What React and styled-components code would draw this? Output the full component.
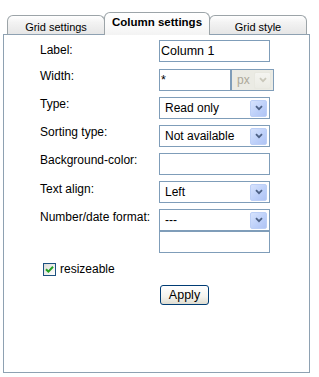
import React, { useState } from 'react'
import styled, { createGlobalStyle } from 'styled-components'

const GlobalStyle = createGlobalStyle`
  html, body {
    margin: 0;
    padding: 0;
    background: #fff;
  }
  body {
    font-family: "Liberation Sans", Arial, sans-serif;
    color: #000;
  }
`

const Wrapper = styled.div`
  padding: 12px 0 0 3px;
  width: 307px;
`

const TabBar = styled.div`
  display: flex;
  align-items: flex-end;
  height: 23px;
  padding-left: 4px;
  margin-bottom: -1px;
  position: relative;
  z-index: 1;
`

const Tab = styled.div`
  box-sizing: border-box;
  width: ${p => p.$w}px;
  height: ${p => (p.$active ? 23 : 20)}px;
  margin: 0 ${p => (p.$active ? -1 : 0)}px;
  padding-top: ${p => (p.$active ? 3 : 5)}px;
  border: 1px solid #9ca4a8;
  border-bottom: ${p => (p.$active ? 'none' : '1px solid #8ea1b2')};
  border-radius: 6px 6px 0 0;
  background: ${p =>
    p.$active
      ? 'linear-gradient(#ffffff, #fafafa 60%, #f3f3f3)'
      : 'linear-gradient(#ffffff, #f3f3f3 35%, #e6e6e6)'};
  position: relative;
  z-index: ${p => (p.$active ? 2 : 1)};
  text-align: center;
  font-size: ${p => (p.$active ? 11.5 : 11)}px;
  font-weight: ${p => (p.$active ? 'bold' : 'normal')};
  line-height: 13px;
  color: #000;
  cursor: pointer;
`

const Panel = styled.div`
  box-sizing: border-box;
  height: 339px;
  border: 1px solid #8ea1b2;
  background: #fff;
  padding: 5px 0 0 36px;
`

const Row = styled.div`
  display: grid;
  grid-template-columns: 119px auto;
  height: ${p => p.$h}px;
  align-items: start;
`

const Label = styled.div`
  font-size: 12px;
  line-height: 14px;
  padding-top: ${p => p.$pt || 0}px;
  white-space: nowrap;
`

const Controls = styled.div`
  display: flex;
  flex-direction: ${p => (p.$column ? 'column' : 'row')};
`

const TextInput = styled.div`
  box-sizing: border-box;
  width: ${p => p.$w || 111}px;
  height: 22px;
  border: 1px solid #7f9db9;
  background: #fff;
  padding: 3px 0 0 1px;
  font-size: 12.5px;
  line-height: 14px;
`

const Select = styled.div`
  box-sizing: border-box;
  width: ${p => p.$w || 111}px;
  height: 22px;
  border: 1px solid #7f9db9;
  background: ${p => (p.$disabled ? '#ebebe4' : '#fff')};
  color: ${p => (p.$disabled ? '#aca899' : '#000')};
  display: flex;
  align-items: center;
  justify-content: space-between;
  padding: 0 2px 0 5px;
  font-size: 12px;
`

const ArrowButton = styled.div`
  box-sizing: border-box;
  width: 17px;
  height: 17px;
  border-radius: 2px;
  border: 1px solid ${p => (p.$disabled ? '#e8e8e0' : '#bccff6')};
  background: ${p =>
    p.$disabled
      ? 'linear-gradient(#f4f4f0, #ebebe4)'
      : 'linear-gradient(135deg, #d7e3fd, #bccff9 60%, #b0c4f4)'};
  display: flex;
  align-items: center;
  justify-content: center;
`

const CheckRow = styled.label`
  display: flex;
  align-items: center;
  gap: 4px;
  height: 14px;
  margin: 9px 0 0 3px;
  font-size: 12px;
  line-height: 14px;
`

const CheckBox = styled.span`
  box-sizing: border-box;
  width: 13px;
  height: 13px;
  border: 1px solid #1c5180;
  background: linear-gradient(135deg, #dcdcd7, #ffffff);
  display: flex;
  align-items: center;
  justify-content: center;
`

const ButtonRow = styled.div`
  margin: 9px 0 0 120px;
`

const ApplyButton = styled.button`
  box-sizing: border-box;
  width: 49px;
  height: 20px;
  border: 1px solid #003c74;
  border-radius: 3px;
  background: linear-gradient(#ffffff, #f4f3ee 60%, #dedcd0);
  font-family: "Liberation Sans", Arial, sans-serif;
  font-size: 12.5px;
  color: #000;
  padding: 0;
  line-height: 16px;
`

const Arrow = ({ disabled }) => (
  <ArrowButton $disabled={disabled}>
    <svg width="8" height="6" viewBox="0 0 8 6">
      <path
        d="M1 1.2 L4 4.2 L7 1.2"
        fill="none"
        stroke={disabled ? '#c9c7ba' : '#4d6185'}
        strokeWidth="1.8"
      />
    </svg>
  </ArrowButton>
)

const tabs = [
  { id: 'grid', name: 'Grid settings', w: 98 },
  { id: 'column', name: 'Column settings', w: 106 },
  { id: 'style', name: 'Grid style', w: 98 }
]

const App = () => {
  const [active, setActive] = useState('column')

  return (
    <Wrapper>
      <GlobalStyle />
      <TabBar>
        {tabs.map(t => (
          <Tab key={t.id} $w={t.w} $active={active === t.id} onClick={() => setActive(t.id)}>
            {t.name}
          </Tab>
        ))}
      </TabBar>
      <Panel>
        <Row $h={29}>
          <Label $pt={3}>Label:</Label>
          <Controls>
            <TextInput>Column 1</TextInput>
          </Controls>
        </Row>
        <Row $h={28}>
          <Label>Width:</Label>
          <Controls>
            <TextInput $w={72}>*</TextInput>
            <Select $w={43} $disabled>
              px
              <Arrow disabled />
            </Select>
          </Controls>
        </Row>
        <Row $h={28}>
          <Label>Type:</Label>
          <Select>
            Read only
            <Arrow />
          </Select>
        </Row>
        <Row $h={28}>
          <Label>Sorting type:</Label>
          <Select>
            Not available
            <Arrow />
          </Select>
        </Row>
        <Row $h={28}>
          <Label>Background-color:</Label>
          <TextInput />
        </Row>
        <Row $h={28}>
          <Label $pt={1}>Text align:</Label>
          <Select>
            Left
            <Arrow />
          </Select>
        </Row>
        <Row $h={44}>
          <Label $pt={1}>Number/date format:</Label>
          <Controls $column>
            <Select>
              ---
              <Arrow />
            </Select>
            <TextInput />
          </Controls>
        </Row>
        <CheckRow>
          <CheckBox>
            <svg width="9" height="9" viewBox="0 0 9 9">
              <path d="M1 4.2 L3.4 6.6 L8 1.8" fill="none" stroke="#21a121" strokeWidth="2" />
            </svg>
          </CheckBox>
          resizeable
        </CheckRow>
        <ButtonRow>
          <ApplyButton>Apply</ApplyButton>
        </ButtonRow>
      </Panel>
    </Wrapper>
  )
}

export default App
